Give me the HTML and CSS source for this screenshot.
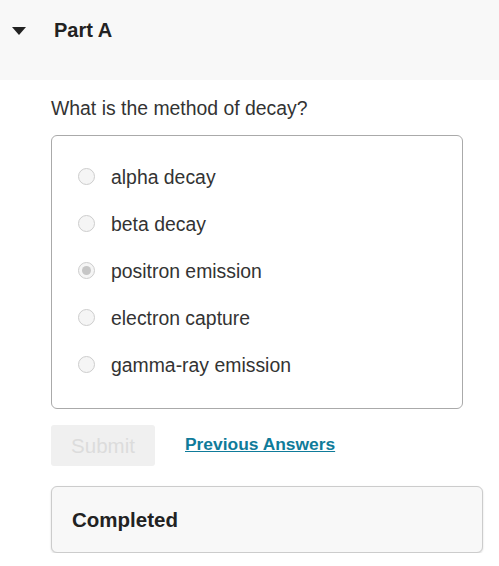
FILE: index.html
```html
<!DOCTYPE html>
<html lang="en">
<head>
  <meta charset="UTF-8">
  <meta name="viewport" content="width=device-width, initial-scale=1.0">
  <title>Part A</title>
  <link rel="stylesheet" href="styles.css">
</head>
<body>

  <div class="part-header">
    <span class="caret"></span>
    <h2 class="part-title">Part A</h2>
  </div>

  <div class="part-body">
    <p class="question">What is the method of decay?</p>

    <div class="choices">
      <label class="choice"><span class="radio"></span>alpha decay</label>
      <label class="choice"><span class="radio"></span>beta decay</label>
      <label class="choice"><span class="radio checked"></span>positron emission</label>
      <label class="choice"><span class="radio"></span>electron capture</label>
      <label class="choice"><span class="radio"></span>gamma-ray emission</label>
    </div>

    <div class="actions">
      <button class="submit-button" disabled>Submit</button>
      <a href="#" class="previous-link">Previous Answers</a>
    </div>

    <div class="status-box">Completed</div>
  </div>

</body>
</html>
```

FILE: styles.css
```css
body {
  margin: 0;
  background-color: #fff;
  font-family: "Liberation Sans", Arial, sans-serif;
  color: #333;
}

.part-header {
  height: 80px;
  box-sizing: border-box;
  padding: 19px 0 0 12px;
  background-color: #f8f8f8;
  display: flex;
  align-items: flex-start;
}

.caret {
  width: 0;
  height: 0;
  margin-top: 8px;
  border-left: 7.5px solid transparent;
  border-right: 7.5px solid transparent;
  border-top: 8px solid #222;
}

.part-title {
  margin: 0 0 0 28px;
  font-size: 20px;
  line-height: 22px;
  font-weight: bold;
  color: #222;
}

.part-body {
  padding: 0 16px 0 51px;
}

.question {
  margin: 0;
  padding-top: 16px;
  font-size: 19.4px;
  line-height: 24px;
}

.choices {
  margin: 15px 20px 0 0;
  padding: 18px 26px 19px;
  border: 1px solid #aaa;
  border-radius: 6px;
}

.choice {
  display: flex;
  align-items: center;
  height: 47px;
  font-size: 19.4px;
  color: #333;
}

.choice .radio {
  margin-top: -2px;
}

.radio {
  width: 17px;
  height: 17px;
  box-sizing: border-box;
  margin-right: 16px;
  border: 1px solid #cdcdcd;
  border-radius: 50%;
  background-color: #f5f5f5;
  display: flex;
  align-items: center;
  justify-content: center;
}

.radio.checked::after {
  content: "";
  width: 9px;
  height: 9px;
  border-radius: 50%;
  background-color: #c6c6c6;
}

.actions {
  display: flex;
  align-items: center;
  margin-top: 16px;
}

.submit-button {
  width: 104px;
  height: 41px;
  border: none;
  border-radius: 3px;
  background-color: #f0f0f0;
  color: #dcdcdc;
  font-family: "Liberation Sans", Arial, sans-serif;
  font-size: 20.5px;
  padding: 0;
}

.previous-link {
  margin: 0 0 3px 30px;
  font-size: 17.4px;
  font-weight: bold;
  color: #0f7b9a;
  text-decoration: underline;
}

.status-box {
  margin-top: 20px;
  height: 67px;
  box-sizing: border-box;
  padding-left: 20px;
  display: flex;
  align-items: center;
  border: 1px solid #ccc;
  border-radius: 6px;
  background-color: #f8f8f8;
  box-shadow: 0 1px 2px rgba(0, 0, 0, 0.15);
  font-size: 20.5px;
  font-weight: bold;
  color: #222;
}
```
